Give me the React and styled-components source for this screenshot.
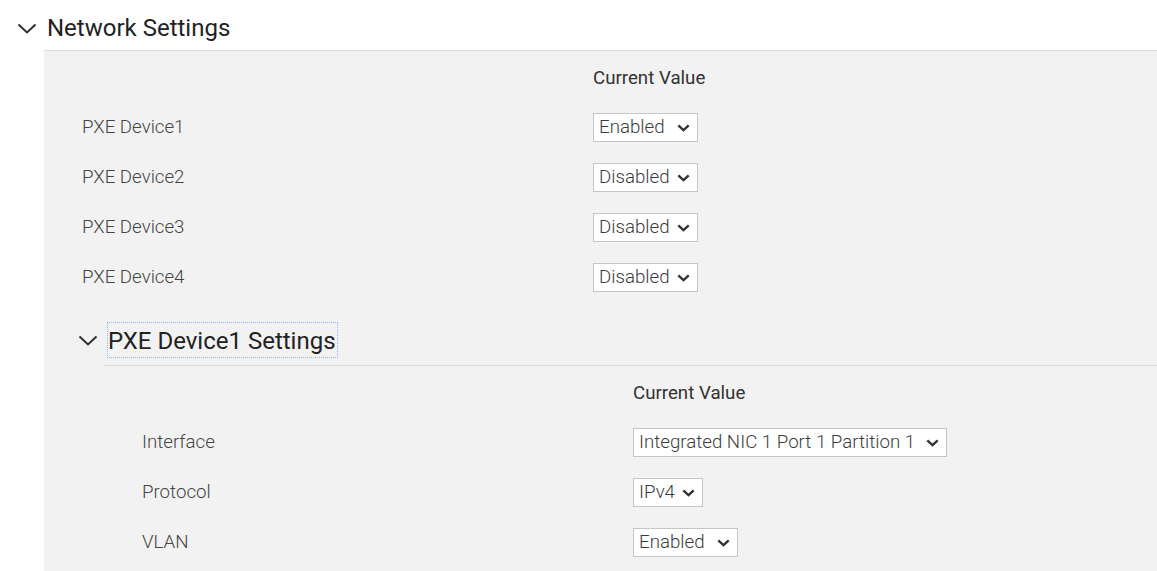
import React from "react";
import styled, { createGlobalStyle } from "styled-components";

const GlobalStyle = createGlobalStyle`
  html, body {
    margin: 0;
    padding: 0;
    background: #fff;
    font-family: Roboto, "Liberation Sans", sans-serif;
    color: #333;
  }
`;

const Page = styled.div`
  width: 1157px;
  height: 571px;
  overflow: hidden;
`;

const SectionHeader = styled.div`
  display: flex;
  align-items: center;
  gap: 10px;
  padding: 14px 0 8px 17px;
`;

const Title = styled.div`
  font-size: 24px;
  line-height: 28px;
  font-weight: 400;
  color: #222;
`;

const FocusTitle = styled(Title)`
  padding: 4px 1px 2px 0;
  outline: 1px dotted #8fb4ff;
`;

const Panel = styled.div`
  margin-left: 44px;
  background: #f2f2f2;
  border-top: 1px solid #dcdcdc;
  padding-top: 15px;
  min-height: 530px;
`;

const Grid = styled.div`
  display: grid;
  grid-template-columns: ${(p) => p.$valueX}px 1fr;
`;

const HeadCell = styled.div`
  grid-column: 2;
  font-size: 18.7px;
  line-height: 24px;
  font-weight: 400;
  color: #333;
  margin-bottom: 12px;
`;

const Label = styled.div`
  height: 50px;
  display: flex;
  align-items: center;
  padding-left: 38px;
  font-size: 18.7px;
  font-weight: 300;
  color: #444;
`;

const Value = styled.div`
  height: 50px;
  display: flex;
  align-items: center;
`;

const SelectBox = styled.div`
  position: relative;
  box-sizing: border-box;
  width: ${(p) => p.$width}px;
  height: 29px;
  border: 1px solid #c6c6c6;
  background: #fff;
  padding-left: 5px;
  display: flex;
  align-items: center;
  font-size: 18.7px;
  font-weight: 300;
  color: #3c3c3c;
  white-space: nowrap;
`;

const Caret = styled.svg`
  position: absolute;
  right: 7px;
  top: 10px;
`;

const SubSection = styled.div`
  margin-left: 34px;
`;

const SubHeader = styled.div`
  display: flex;
  align-items: center;
  gap: 10px;
  padding: 21px 0 8px 0;
`;

const SubPanel = styled.div`
  margin-left: 26px;
  border-top: 1px solid #dcdcdc;
  padding-top: 15px;
`;

const Chevron = () => (
  <svg width="20" height="11" viewBox="0 0 20 11">
    <polyline
      points="1.5,1.5 10,9.5 18.5,1.5"
      fill="none"
      stroke="#2f2f2f"
      strokeWidth="2"
    />
  </svg>
);

const Select = ({ value, width }) => (
  <SelectBox $width={width}>
    {value}
    <Caret width="13" height="8" viewBox="0 0 13 8">
      <polyline
        points="1.3,1.3 6.5,6.2 11.7,1.3"
        fill="none"
        stroke="#333"
        strokeWidth="2.3"
      />
    </Caret>
  </SelectBox>
);

const SettingsGrid = ({ valueX, rows }) => (
  <Grid $valueX={valueX}>
    <HeadCell>Current Value</HeadCell>
    {rows.map((r) => (
      <React.Fragment key={r.label}>
        <Label>{r.label}</Label>
        <Value>
          <Select value={r.value} width={r.width} />
        </Value>
      </React.Fragment>
    ))}
  </Grid>
);

const deviceRows = [
  { label: "PXE Device1", value: "Enabled", width: 105 },
  { label: "PXE Device2", value: "Disabled", width: 105 },
  { label: "PXE Device3", value: "Disabled", width: 105 },
  { label: "PXE Device4", value: "Disabled", width: 105 },
];

const pxeRows = [
  { label: "Interface", value: "Integrated NIC 1 Port 1 Partition 1", width: 314 },
  { label: "Protocol", value: "IPv4", width: 70 },
  { label: "VLAN", value: "Enabled", width: 105 },
];

export default function App() {
  return (
    <Page>
      <GlobalStyle />
      <SectionHeader>
        <Chevron />
        <Title>Network Settings</Title>
      </SectionHeader>
      <Panel>
        <SettingsGrid valueX={549} rows={deviceRows} />
        <SubSection>
          <SubHeader>
            <Chevron />
            <FocusTitle>PXE Device1 Settings</FocusTitle>
          </SubHeader>
          <SubPanel>
            <SettingsGrid valueX={529} rows={pxeRows} />
          </SubPanel>
        </SubSection>
      </Panel>
    </Page>
  );
}
